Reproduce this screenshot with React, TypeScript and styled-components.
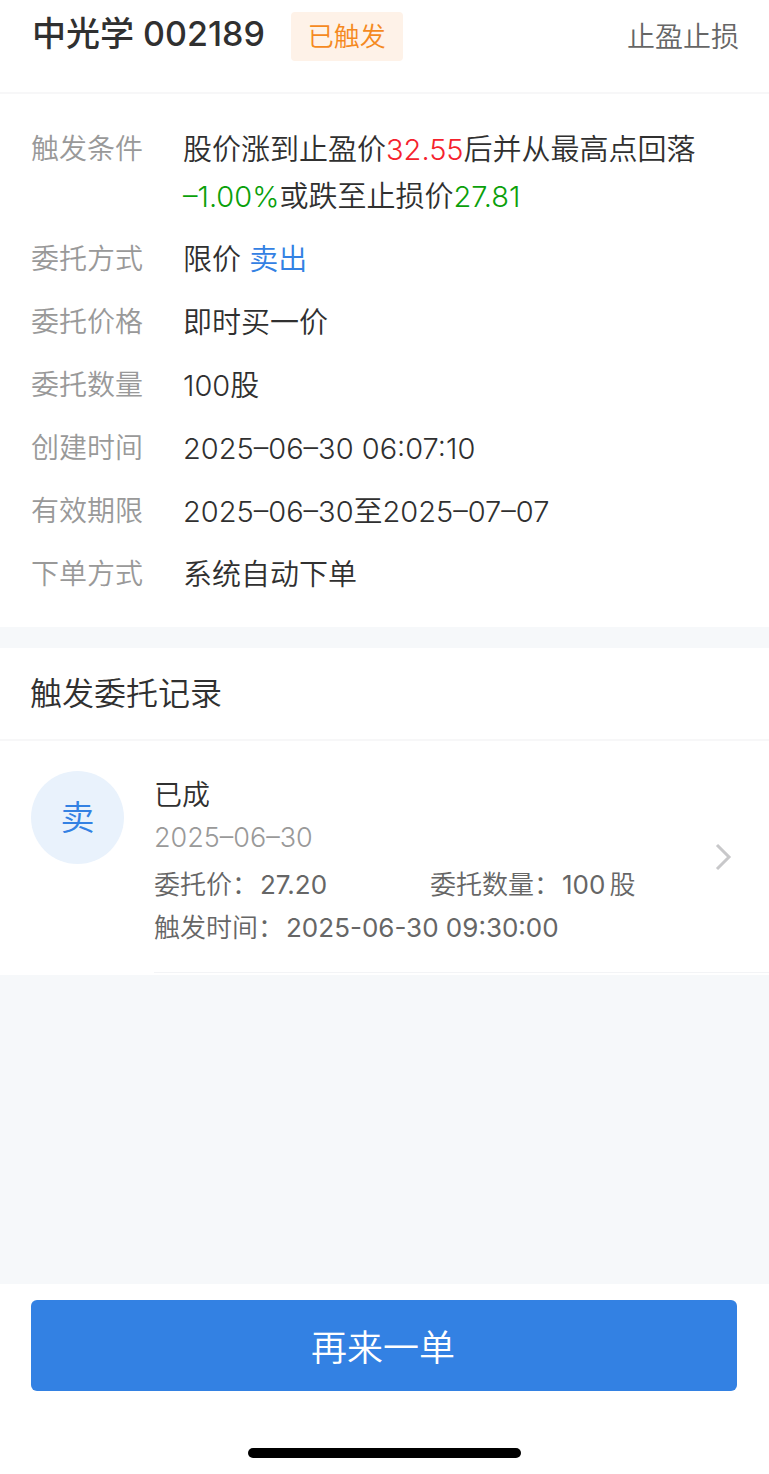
import React from "react";
import styled, { createGlobalStyle } from "styled-components";

const Global = createGlobalStyle`
  * { box-sizing: border-box; }
  body {
    margin: 0;
    background: #f6f8fa;
    color: #303030;
    font-family: Inter, "Noto Sans CJK SC", sans-serif;
    font-weight: 350;
  }
  h1, h2, p, dl, dd { margin: 0; font-weight: inherit; }
`;

const Page = styled.div`
  min-height: 100vh;
  display: flex;
  flex-direction: column;
`;

const Header = styled.header`
  display: flex;
  align-items: flex-start;
  padding: 12px 30px 29px 32px;
  background: #fff;
  border-bottom: 2px solid #f7f7f8;
`;

const StockTitle = styled.h1`
  && { font-weight: 500; }
  font-size: 34px;
  line-height: 44px;
`;

const StatusTag = styled.span`
  margin-left: 26px;
  padding: 1px 17px 0;
  border-radius: 4px;
  background: #fef2e8;
  color: #f58a1f;
  font-size: 26px;
  line-height: 48px;
`;

const Kind = styled.span`
  margin-left: auto;
  color: #666;
  font-size: 28px;
  line-height: 51px;
`;

const Details = styled.dl`
  display: grid;
  grid-template-columns: 152px 1fr;
  row-gap: 16px;
  padding: 32px 31px 29px;
  background: #fff;
  line-height: 47px;
`;

const Label = styled.dt`
  color: #999;
  font-size: 28px;
`;

const Value = styled.dd`
  font-size: 29px;
`;

const Tinted = styled.span<{ $color: string }>`
  color: ${(p) => p.$color};
`;

const Records = styled.section`
  margin-top: 21px;
  background: #fff;
`;

const RecordsTitle = styled.h2`
  padding: 1px 30px 0;
  border-bottom: 2px solid #f7f7f8;
  font-size: 32px;
  line-height: 90px;
`;

const Record = styled.a`
  display: flex;
  align-items: flex-start;
  padding: 30px 0 2px 31px;
  color: #666;
  text-decoration: none;
`;

const SideBadge = styled.span`
  flex: none;
  width: 93px;
  height: 93px;
  border-radius: 50%;
  background: #e9f2fc;
  color: #3381e3;
  font-size: 34px;
  line-height: 93px;
  text-align: center;
`;

const RecordMain = styled.div`
  flex: 1;
  display: flex;
  align-items: center;
  margin-left: 30px;
  padding: 0 37px 23px 0;
  border-bottom: 1px solid #f3f4f6;
`;

const RecordBody = styled.div`
  flex: 1;
  font-size: 26px;
  line-height: 43px;
`;

const RecordState = styled.p`
  color: #303030;
  font-size: 28px;
  line-height: 49px;
`;

const RecordDate = styled.p`
  margin-bottom: 8px;
  color: #999;
  font-size: 27px;
  line-height: 35px;
`;

const RecordRow = styled.p`
  display: flex;
`;

const RecordCell = styled.span`
  flex: 0 0 276px;
`;

const Figure = styled.span`
  margin: 0 4px 0 2px;
  font-weight: 400;
`;

const Chevron = styled.svg`
  flex: none;
  margin-bottom: 6px;
`;

const Footer = styled.footer`
  margin-top: auto;
  padding: 16px 32px 16px 31px;
  background: #fff;
`;

const PrimaryButton = styled.button`
  display: block;
  width: 100%;
  height: 91px;
  padding: 0 2px 2px 0;
  border: 0;
  border-radius: 6px;
  background: #3381e3;
  color: #fff;
  font: inherit;
  font-size: 36px;
`;

const HomeIndicator = styled.div`
  width: 273px;
  height: 10px;
  margin: 57px auto 0;
  border-radius: 5px;
  background: #000;
`;

const RED = "#f5222d";
const GREEN = "#0aa00a";
const BLUE = "#3381e3";

export default function App() {
  return (
    <Page>
      <Global />
      <Header>
        <StockTitle>中光学 002189</StockTitle>
        <StatusTag>已触发</StatusTag>
        <Kind>止盈止损</Kind>
      </Header>
      <Details>
        <Label>触发条件</Label>
        <Value>
          股价涨到止盈价<Tinted $color={RED}>32.55</Tinted>后并从最高点回落
          <br />
          <Tinted $color={GREEN}>–1.00%</Tinted>或跌至止损价<Tinted $color={GREEN}>27.81</Tinted>
        </Value>
        <Label>委托方式</Label>
        <Value>限价 <Tinted $color={BLUE}>卖出</Tinted></Value>
        <Label>委托价格</Label>
        <Value>即时买一价</Value>
        <Label>委托数量</Label>
        <Value>100股</Value>
        <Label>创建时间</Label>
        <Value>2025–06–30 06:07:10</Value>
        <Label>有效期限</Label>
        <Value>2025–06–30至2025–07–07</Value>
        <Label>下单方式</Label>
        <Value>系统自动下单</Value>
      </Details>
      <Records>
        <RecordsTitle>触发委托记录</RecordsTitle>
        <Record href="#record">
          <SideBadge>卖</SideBadge>
          <RecordMain>
            <RecordBody>
              <RecordState>已成</RecordState>
              <RecordDate>2025–06–30</RecordDate>
              <RecordRow>
                <RecordCell>委托价：<Figure>27.20</Figure></RecordCell>
                <RecordCell>委托数量：<Figure>100</Figure>股</RecordCell>
              </RecordRow>
              <RecordRow>触发时间：<Figure>2025-06-30 09:30:00</Figure></RecordRow>
            </RecordBody>
            <Chevron width="18" height="28" viewBox="0 0 18 28" fill="none" stroke="#c8c8ca" strokeWidth="3">
              <path d="M3 2l12 12L3 26" />
            </Chevron>
          </RecordMain>
        </Record>
      </Records>
      <Footer>
        <PrimaryButton type="button">再来一单</PrimaryButton>
        <HomeIndicator />
      </Footer>
    </Page>
  );
}
